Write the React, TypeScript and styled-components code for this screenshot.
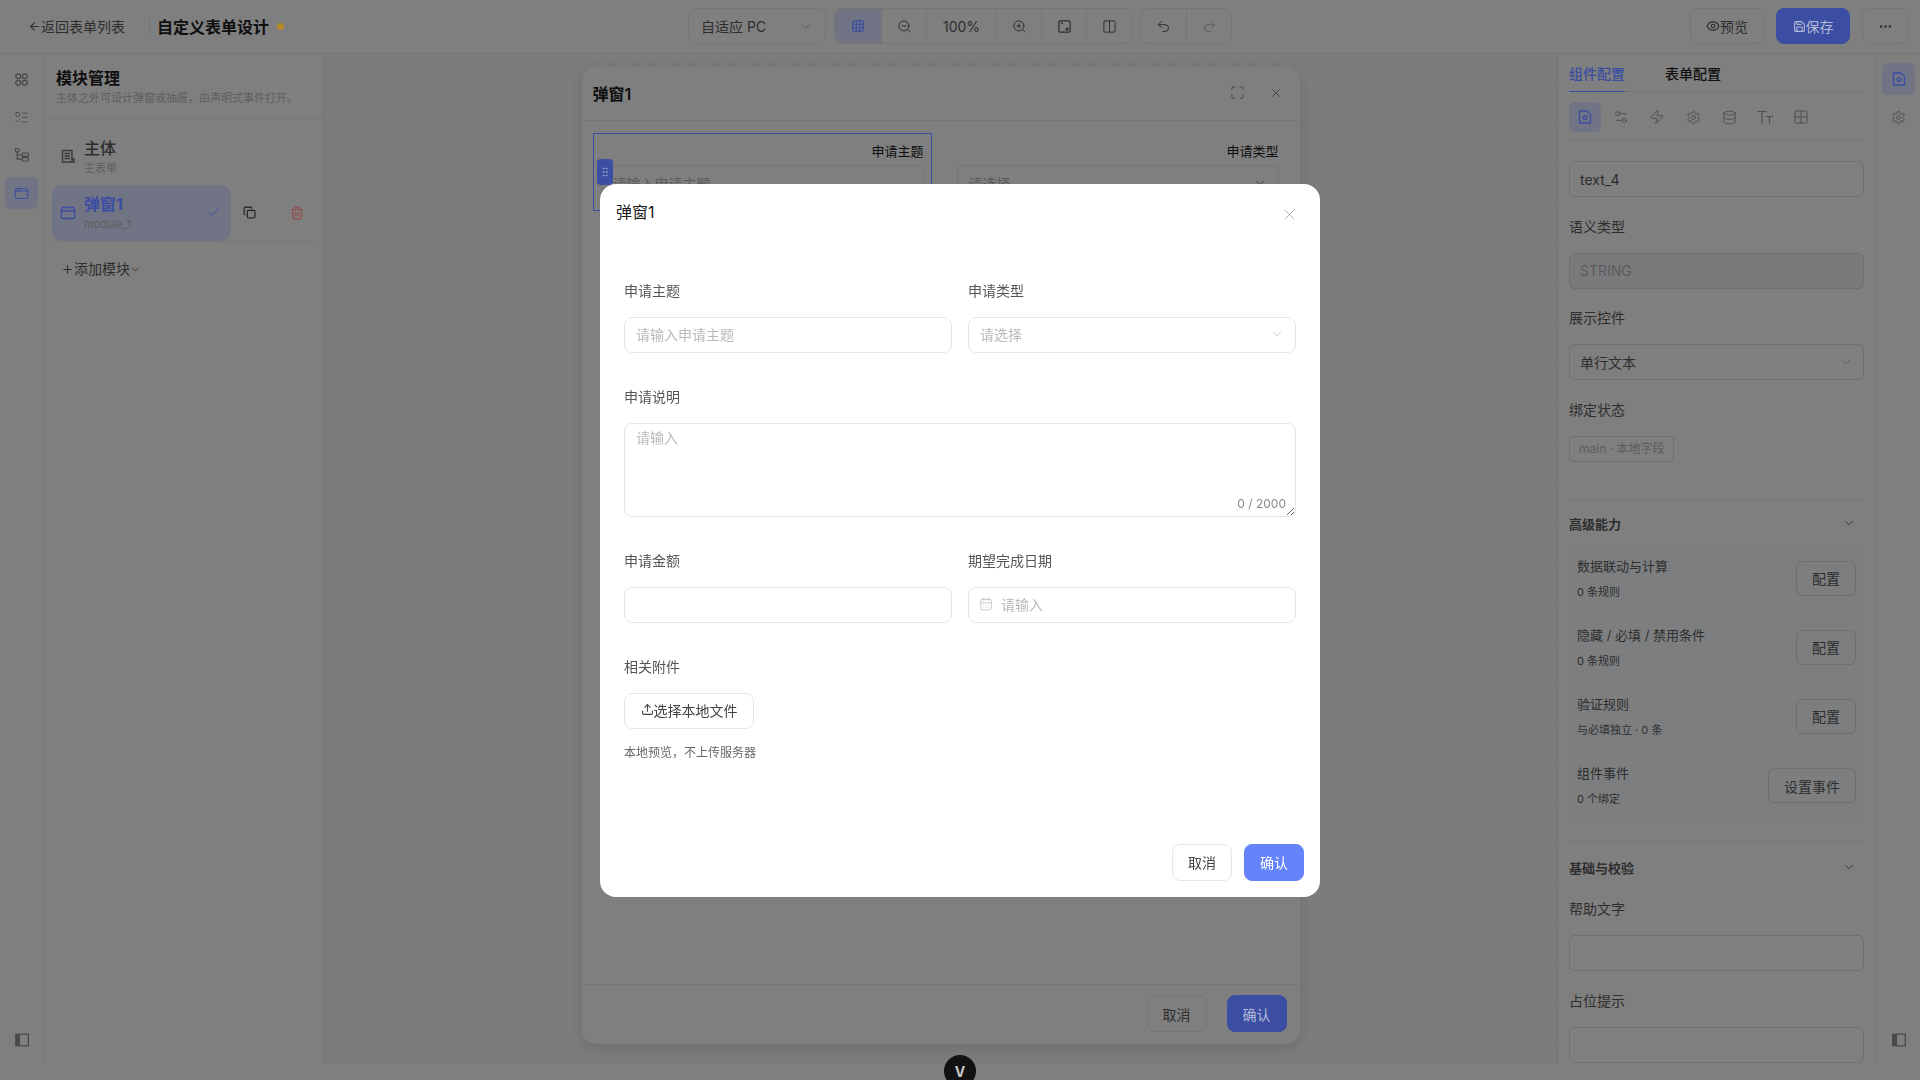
import React from "react";
import styled, { createGlobalStyle } from "styled-components";
import {
  AppWindow,
  ArrowLeft,
  CalendarDays,
  Check,
  ChevronDown,
  Columns2,
  Copy,
  Database,
  Ellipsis,
  Eye,
  Grid2x2,
  Grid3x3,
  GripVertical,
  ListTodo,
  Maximize,
  Plus,
  Redo2,
  Save,
  Settings,
  Settings2,
  Trash2,
  Undo2,
  Upload,
  X,
  Zap,
  ZoomIn,
  ZoomOut,
} from "lucide-react";

// everything behind the dialog is painted in its dimmed colours
const dim = {
  page: "#7f7f7f",
  canvas: "#7a7c7e",
  line: "#767676",
  field: "#6f6f6f",
  text: "#0f0f0f",
  text2: "#2e2e2e",
  sub: "#505050",
  faint: "#5e5e5e",
  blue: "#3b4ea3",
  activeBg: "#717485",
  disabled: "#797a7c",
};

const GlobalStyle = createGlobalStyle`
  html, body {
    margin: 0;
    height: 100%;
    overflow: hidden;
    background: ${dim.page};
    font-family: "Inter", "Noto Sans CJK SC", sans-serif;
  }
  * { box-sizing: border-box; }
  #root { height: 100%; }
`;

const Page = styled.div`
  height: 1080px;
  display: flex;
  flex-direction: column;
  color: ${dim.text};
`;

const Header = styled.header`
  height: 54px;
  flex: none;
  display: grid;
  grid-template-columns: 1fr auto 1fr;
  align-items: center;
  padding: 0 12px 1px;
  border-bottom: 1px solid ${dim.line};
`;

const HeaderLeft = styled.div`
  display: flex;
  align-items: center;
  padding-left: 16px;
`;

const BackLink = styled.span`
  display: flex;
  align-items: center;
  font-size: 14px;
  color: ${dim.text2};
  padding-right: 24px;
  border-right: 1px solid ${dim.line};
  height: 18px;
`;

const PageTitle = styled.h1`
  margin: 0 0 0 7px;
  font-size: 16px;
  font-weight: 600;
`;

const DirtyDot = styled.i`
  width: 7px;
  height: 7px;
  margin-left: 8px;
  border-radius: 50%;
  background: #b58a2a;
`;

const HeaderCenter = styled.div`
  display: flex;
  align-items: center;
  gap: 8px;
`;

const HeaderRight = styled.div`
  display: flex;
  justify-content: flex-end;
  gap: 12px;
`;

const DeviceSelect = styled.div`
  width: 138px;
  height: 36px;
  padding: 0 12px;
  display: flex;
  align-items: center;
  justify-content: space-between;
  font-size: 14px;
  color: ${dim.text2};
  border: 1px solid ${dim.line};
  border-radius: 8px;
  svg { color: ${dim.faint}; }
`;

const ToolGroup = styled.div`
  display: flex;
  height: 36px;
  border: 1px solid ${dim.line};
  border-radius: 8px;
  overflow: hidden;
`;

const ToolCell = styled.div<{ $w?: number; $active?: boolean }>`
  width: ${(p) => p.$w ?? 45}px;
  display: flex;
  align-items: center;
  justify-content: center;
  font-size: 14px;
  color: ${(p) => (p.$active ? dim.blue : dim.text2)};
  background: ${(p) => (p.$active ? dim.activeBg : "transparent")};
  & + & { border-left: 1px solid ${dim.line}; }
`;

const HeadButton = styled.div<{ $w: number; $primary?: boolean }>`
  width: ${(p) => p.$w}px;
  height: 36px;
  display: flex;
  align-items: center;
  justify-content: center;
  font-size: 14px;
  border-radius: 8px;
  color: ${(p) => (p.$primary ? "#b4bad8" : dim.text2)};
  background: ${(p) => (p.$primary ? dim.blue : "transparent")};
  border: 1px solid ${(p) => (p.$primary ? dim.blue : dim.line)};
`;

const Main = styled.div`
  height: 1010px;
  flex: none;
  display: flex;
`;

const Rail = styled.nav<{ $side: "left" | "right" }>`
  width: ${(p) => (p.$side === "left" ? 44 : 43)}px;
  flex: none;
  display: flex;
  flex-direction: column;
  gap: 6px;
  padding: 9px 5px 8px;
  ${(p) => (p.$side === "left" ? `border-right: 1px solid ${dim.line};` : "")}
`;

const RailButton = styled.div<{ $active?: boolean }>`
  width: 33px;
  height: 32px;
  flex: none;
  display: flex;
  align-items: center;
  justify-content: center;
  border-radius: 6px;
  color: ${(p) => (p.$active ? dim.blue : "#484848")};
  background: ${(p) => (p.$active ? dim.activeBg : "transparent")};
`;

const RailFoot = styled(RailButton)`
  margin-top: auto;
`;

const ModulePanel = styled.aside`
  width: 280px;
  flex: none;
  border-right: 1px solid ${dim.line};
`;

const PanelHead = styled.div`
  height: 65px;
  padding: 12px 12px 0;
  border-bottom: 1px solid ${dim.line};
`;

const PanelTitle = styled.h2`
  margin: 0;
  font-size: 16px;
  line-height: 24px;
  font-weight: 600;
`;

const PanelHint = styled.p`
  margin: 0;
  font-size: 11px;
  line-height: 16px;
  color: ${dim.faint};
`;

const ModuleList = styled.div`
  padding: 9px 8px 0 8px;
`;

const ModuleRow = styled.div<{ $divider?: boolean }>`
  display: flex;
  align-items: center;
  ${(p) => (p.$divider ? `border-bottom: 1px solid ${dim.line};` : "")}
`;

const ModuleItem = styled.div<{ $active?: boolean }>`
  width: 179px;
  height: 56.5px;
  padding: 0 10px 0 8px;
  display: flex;
  align-items: center;
  gap: 8px;
  border-radius: 10px;
  color: ${(p) => (p.$active ? dim.blue : "#3a3a3a")};
  background: ${(p) => (p.$active ? dim.activeBg : "transparent")};
`;

const ModuleText = styled.div`
  flex: 1;
  padding-top: 3px;
`;

const ModuleName = styled.div<{ $active?: boolean }>`
  font-size: 16px;
  line-height: 20px;
  font-weight: ${(p) => (p.$active ? 700 : 500)};
  color: ${(p) => (p.$active ? dim.blue : dim.text2)};
`;

const ModuleKey = styled.div`
  font-size: 11px;
  line-height: 20px;
  color: ${dim.faint};
`;

const RowAction = styled.div<{ $danger?: boolean }>`
  width: 36px;
  display: flex;
  justify-content: center;
  color: ${(p) => (p.$danger ? "#9b4a4a" : "#1c1c1c")};
  & + & { margin-left: 12px; }
`;

const AddModule = styled.div`
  display: flex;
  align-items: center;
  margin: 17px 0 0 9px;
  font-size: 14px;
  line-height: 20px;
  color: ${dim.text2};
`;

const Canvas = styled.main`
  flex: 1;
  min-width: 0;
  display: flex;
  justify-content: center;
  padding-top: 13px;
  background-color: ${dim.canvas};
  background-image: radial-gradient(#757678 1px, transparent 1px);
  background-size: 20px 20px;
`;

const PreviewDialog = styled.section`
  width: 718px;
  height: 977px;
  display: flex;
  flex-direction: column;
  background: ${dim.page};
  border-radius: 14px;
  box-shadow: 0 4px 14px rgba(0, 0, 0, 0.12);
`;

const PreviewHead = styled.div`
  height: 54px;
  flex: none;
  padding: 0 17px 2px 11px;
  display: flex;
  align-items: center;
  border-bottom: 1px solid ${dim.line};
`;

const PreviewTitle = styled.h3`
  margin: 0;
  flex: 1;
  font-size: 16px;
  font-weight: 600;
`;

const PreviewIcon = styled.span`
  display: flex;
  margin-left: 24px;
  color: #3f3f3f;
`;

const PreviewBody = styled.div`
  flex: 1;
  display: grid;
  grid-template-columns: 339px 338px;
  gap: 17px;
  align-content: start;
  padding: 12px 0 0 11px;
`;

const PreviewField = styled.div<{ $selected?: boolean }>`
  position: relative;
  height: 78px;
  padding: 7px 7px 0;
  text-align: right;
  border: 1px solid ${(p) => (p.$selected ? dim.blue : "transparent")};
`;

const PreviewLabel = styled.div`
  font-size: 13px;
  line-height: 20px;
  color: ${dim.text};
`;

const PreviewInput = styled.div`
  height: 36px;
  margin-top: 4px;
  padding: 0 11px;
  display: flex;
  align-items: center;
  justify-content: space-between;
  font-size: 14px;
  color: #5b5b5b;
  border: 1px solid ${dim.line};
  border-radius: 6px;
`;

const DragHandle = styled.span`
  position: absolute;
  left: 3px;
  top: 25px;
  width: 16px;
  height: 26px;
  display: flex;
  align-items: center;
  justify-content: center;
  border-radius: 4px;
  color: #97a1cf;
  background: ${dim.blue};
`;

const PreviewFoot = styled.div`
  height: 60px;
  flex: none;
  display: flex;
  justify-content: flex-end;
  gap: 20px;
  padding: 10px 13px 0 0;
  border-top: 1px solid ${dim.line};
`;

const PreviewButton = styled.div<{ $primary?: boolean }>`
  width: 60px;
  height: 37px;
  display: flex;
  align-items: center;
  justify-content: center;
  font-size: 14px;
  border-radius: 8px;
  color: ${(p) => (p.$primary ? "#b4bad8" : dim.text2)};
  background: ${(p) => (p.$primary ? dim.blue : "transparent")};
  border: 1px solid ${(p) => (p.$primary ? dim.blue : dim.line)};
`;

const ConfigPanel = styled.aside`
  width: 320px;
  flex: none;
  padding: 0 12px 0 11px;
  border-left: 1px solid ${dim.line};
  border-right: 1px solid ${dim.line};
  overflow: hidden;
`;

const Tabs = styled.div`
  height: 38px;
  display: flex;
  gap: 40px;
  border-bottom: 1px solid ${dim.line};
`;

const Tab = styled.div<{ $active?: boolean }>`
  height: 38px;
  padding-top: 9px;
  font-size: 14px;
  line-height: 22px;
  font-weight: 500;
  color: ${(p) => (p.$active ? dim.blue : dim.text)};
  border-bottom: 1px solid ${(p) => (p.$active ? dim.blue : "transparent")};
`;

const SubTabs = styled.div`
  display: flex;
  gap: 4px;
  padding: 10px 0 8px;
  border-bottom: 1px solid ${dim.line};
`;

const SubTab = styled.div<{ $active?: boolean }>`
  width: 32px;
  height: 30px;
  display: flex;
  align-items: center;
  justify-content: center;
  border-radius: 6px;
  color: ${(p) => (p.$active ? dim.blue : "#4c4c4c")};
  background: ${(p) => (p.$active ? dim.activeBg : "transparent")};
`;

const ConfigBox = styled.div<{ $disabled?: boolean }>`
  height: 36px;
  padding: 0 10px;
  display: flex;
  align-items: center;
  justify-content: space-between;
  font-size: 14px;
  color: ${(p) => (p.$disabled ? "#5c5c5c" : dim.text2)};
  background: ${(p) => (p.$disabled ? dim.disabled : "transparent")};
  border: 1px solid ${dim.field};
  border-radius: 6px;
  svg { color: ${dim.faint}; }
`;

const FirstBox = styled(ConfigBox)`
  margin-top: 20px;
`;

const ConfigLabel = styled.div`
  margin: 18.5px 0 15px;
  font-size: 14px;
  line-height: 22px;
  color: ${dim.text2};
`;

const HelpLabel = styled(ConfigLabel)`
  margin-top: 9px;
`;

const BindTag = styled.span`
  display: block;
  width: fit-content;
  margin-top: 1.5px;
  padding: 0 9px;
  height: 26px;
  line-height: 24px;
  font-size: 12px;
  color: #5c5c5c;
  border: 1px solid ${dim.field};
  border-radius: 4px;
`;

const SectionHead = styled.div<{ $h: number; $gap: number }>`
  height: ${(p) => p.$h}px;
  margin-top: ${(p) => p.$gap}px;
  padding: 3px 8px 0 0;
  display: flex;
  align-items: center;
  justify-content: space-between;
  font-size: 13px;
  font-weight: 600;
  color: ${dim.text2};
  border-top: 1px solid ${dim.line};
`;

const RuleList = styled.div`
  background: #7c7e80;
  border-radius: 6px;
`;

const RuleRow = styled.div`
  height: 69.2px;
  padding: 0 8px;
  display: flex;
  align-items: center;
  justify-content: space-between;
`;

const RuleTitle = styled.div`
  font-size: 13px;
  line-height: 20px;
  color: ${dim.text2};
`;

const RuleMeta = styled.div`
  margin-top: 7px;
  font-size: 11px;
  line-height: 18px;
  color: ${dim.text2};
`;

const RuleButton = styled.div`
  height: 35px;
  padding: 0 15px;
  display: flex;
  align-items: center;
  font-size: 14px;
  color: ${dim.text2};
  border: 1px solid ${dim.field};
  border-radius: 6px;
`;

const StatusBubble = styled.div`
  position: fixed;
  left: 944px;
  top: 1055px;
  width: 32px;
  height: 32px;
  display: flex;
  align-items: center;
  justify-content: center;
  border-radius: 50%;
  font-size: 14px;
  font-weight: 700;
  color: #c8c8c8;
  background: #121212;
`;

const Overlay = styled.div`
  position: fixed;
  inset: 0;
  display: flex;
  align-items: center;
  justify-content: center;
`;

const Dialog = styled.div`
  width: 720px;
  height: 713px;
  display: flex;
  flex-direction: column;
  background: #fff;
  border-radius: 16px;
  color: #1f2329;
`;

const DialogHead = styled.div`
  height: 96px;
  flex: none;
  display: flex;
  justify-content: space-between;
  padding: 16px 22px 0 16px;
`;

const DialogTitle = styled.h2`
  margin: 0;
  font-size: 16px;
  line-height: 24px;
  font-weight: 400;
  color: #1a1a1a;
`;

const DialogClose = styled.span`
  display: flex;
  margin-top: 6px;
  color: #9a9a9a;
`;

const DialogBody = styled.form`
  flex: 1;
  padding: 0 24px;
  display: flex;
  flex-direction: column;
  gap: 33px;
`;

const FormRow = styled.div`
  display: grid;
  grid-template-columns: 1fr 1fr;
  gap: 16px;
`;

const Field = styled.div``;

const FieldLabel = styled.label`
  display: block;
  margin-bottom: 15px;
  font-size: 14px;
  line-height: 22px;
  color: #555;
`;

const boxStyles = `
  width: 100%;
  height: 36px;
  padding: 0 11px;
  font-family: inherit;
  font-size: 14px;
  color: #333;
  background: #fff;
  border: 1px solid #e6e6e8;
  border-radius: 8px;
  outline: none;
  &::placeholder { color: #b9b9bd; }
`;

const TextInput = styled.input`
  ${boxStyles}
`;

const SelectBox = styled.div`
  ${boxStyles}
  display: flex;
  align-items: center;
  justify-content: space-between;
  padding-bottom: 2px;
  color: #b9b9bd;
`;

const DateBox = styled.div`
  ${boxStyles}
  display: flex;
  align-items: center;
  gap: 8px;
  padding-left: 10px;
  padding-bottom: 2px;
  color: #b9b9bd;
`;

const AreaWrap = styled.div`
  position: relative;
  height: 94px;
`;

const TextArea = styled.textarea`
  ${boxStyles}
  display: block;
  height: 94px;
  padding: 3px 11px;
  line-height: 22px;
  resize: vertical;
`;

const Counter = styled.span`
  position: absolute;
  right: 10px;
  bottom: 4px;
  font-size: 12px;
  line-height: 18px;
  color: #8a8a8a;
`;

const UploadButton = styled.button`
  width: 130px;
  height: 36px;
  display: flex;
  align-items: center;
  justify-content: center;
  padding: 0 0 2px;
  font-family: inherit;
  font-size: 14px;
  color: #444;
  background: #fff;
  border: 1px solid #e6e6e8;
  border-radius: 8px;
`;

const UploadHint = styled.p`
  margin: 15px 0 0;
  font-size: 12px;
  line-height: 18px;
  color: #666;
`;

const DialogFoot = styled.div`
  flex: none;
  display: flex;
  justify-content: flex-end;
  gap: 12px;
  padding: 0 16px 16px;
`;

const DialogButton = styled.button<{ $primary?: boolean }>`
  width: 60px;
  height: 37px;
  padding: 0;
  font-family: inherit;
  font-size: 14px;
  border-radius: 8px;
  color: ${(p) => (p.$primary ? "#fff" : "#444")};
  background: ${(p) => (p.$primary ? "#6583fa" : "#fff")};
  border: 1px solid ${(p) => (p.$primary ? "#6583fa" : "#e6e6e8")};
`;

type IconProps = { size?: number };

const stroke = {
  fill: "none",
  stroke: "currentColor",
  strokeWidth: 1.6,
  strokeLinecap: "round" as const,
  strokeLinejoin: "round" as const,
};

const ComponentsIcon = ({ size = 15 }: IconProps) => (
  <svg width={size} height={size} viewBox="0 0 16 16" {...stroke} strokeWidth={1.3}>
    <circle cx="4.5" cy="4.5" r="2.6" />
    <circle cx="11.5" cy="4.5" r="2.6" />
    <circle cx="4.5" cy="11.5" r="2.6" />
    <circle cx="11.5" cy="11.5" r="2.6" />
  </svg>
);

const TreeIcon = ({ size = 16 }: IconProps) => (
  <svg width={size} height={size} viewBox="0 0 16 16" {...stroke} strokeWidth={1.2}>
    <rect x="1.5" y="1.5" width="3.5" height="3.5" rx="1" />
    <path d="M3.2 5v7.2h4M3.2 8h4" />
    <rect x="8" y="6" width="6.5" height="3.4" rx="1" />
    <rect x="8" y="10.6" width="6.5" height="3.4" rx="1" />
  </svg>
);

const MainFormIcon = ({ size = 16 }: IconProps) => (
  <svg width={size} height={size} viewBox="0 0 16 16" {...stroke} strokeWidth={1.4}>
    <path d="M12 12.5V2.5H2.5V14H14" />
    <path d="M5 5.5h4.5M5 8h4.5M5 10.5h4.5M12 11h2v3" />
  </svg>
);

const ModuleIcon = ({ size = 16 }: IconProps) => (
  <svg width={size} height={size} viewBox="0 0 16 16" {...stroke} strokeWidth={1.4}>
    <rect x="1.5" y="2.5" width="13" height="11" rx="1.5" />
    <path d="M1.5 6h13" />
  </svg>
);

const FitIcon = ({ size = 15 }: IconProps) => (
  <svg width={size} height={size} viewBox="0 0 16 16" {...stroke} strokeWidth={1.3}>
    <rect x="2" y="2" width="12" height="12" rx="1.5" />
    <path d="M11.5 9.5v2h-2z" fill="currentColor" />
    <path d="M4.5 4.5h1.5" />
  </svg>
);

const FileGearIcon = ({ size = 16 }: IconProps) => (
  <svg width={size} height={size} viewBox="0 0 16 16" {...stroke} strokeWidth={1.4}>
    <path d="M2.5 2h7.5l3.5 3.5V14h-11z" />
    <circle cx="8" cy="8.5" r="1.8" />
  </svg>
);

const TextSizeIcon = ({ size = 16 }: IconProps) => (
  <svg width={size} height={size} viewBox="0 0 16 16" {...stroke} strokeWidth={1.2}>
    <path d="M1 2.5h8M5 2.5V14M9.5 7.5h6M12.5 7.5V14" />
  </svg>
);

const PanelToggleIcon = ({ size = 14 }: IconProps) => (
  <svg width={size} height={size} viewBox="0 0 14 14">
    <rect x="0.7" y="1.2" width="12.6" height="11.6" fill="none" stroke="currentColor" strokeWidth="1.2" />
    <rect x="1" y="1.5" width="4" height="11" fill="currentColor" />
  </svg>
);

const rules = [
  { title: "数据联动与计算", meta: "0 条规则", action: "配置" },
  { title: "隐藏 / 必填 / 禁用条件", meta: "0 条规则", action: "配置" },
  { title: "验证规则", meta: "与必填独立 · 0 条", action: "配置" },
  { title: "组件事件", meta: "0 个绑定", action: "设置事件" },
];

const App = () => {
  return (
    <>
      <GlobalStyle />
      <Page>
        <Header>
          <HeaderLeft>
            <BackLink>
              <ArrowLeft size={13} />
              返回表单列表
            </BackLink>
            <PageTitle>自定义表单设计</PageTitle>
            <DirtyDot />
          </HeaderLeft>
          <HeaderCenter>
            <DeviceSelect>
              自适应 PC
              <ChevronDown size={15} strokeWidth={1.5} />
            </DeviceSelect>
            <ToolGroup>
              <ToolCell $w={46} $active>
                <Grid3x3 size={14} />
              </ToolCell>
              <ToolCell>
                <ZoomOut size={15} strokeWidth={1.6} />
              </ToolCell>
              <ToolCell $w={70}>100%</ToolCell>
              <ToolCell>
                <ZoomIn size={15} strokeWidth={1.6} />
              </ToolCell>
              <ToolCell>
                <FitIcon />
              </ToolCell>
              <ToolCell>
                <Columns2 size={15} strokeWidth={1.5} />
              </ToolCell>
            </ToolGroup>
            <ToolGroup>
              <ToolCell>
                <Undo2 size={15} strokeWidth={1.5} />
              </ToolCell>
              <ToolCell>
                <Redo2 size={15} strokeWidth={1.5} color="#5c5c5c" />
              </ToolCell>
            </ToolGroup>
          </HeaderCenter>
          <HeaderRight>
            <HeadButton $w={74}>
              <Eye size={14} />
              预览
            </HeadButton>
            <HeadButton $w={74} $primary>
              <Save size={13} />
              保存
            </HeadButton>
            <HeadButton $w={46}>
              <Ellipsis size={15} />
            </HeadButton>
          </HeaderRight>
        </Header>

        <Main>
          <Rail $side="left">
            <RailButton>
              <ComponentsIcon />
            </RailButton>
            <RailButton>
              <ListTodo size={15} strokeWidth={1.3} />
            </RailButton>
            <RailButton>
              <TreeIcon />
            </RailButton>
            <RailButton $active>
              <AppWindow size={15} strokeWidth={1.5} />
            </RailButton>
            <RailFoot>
              <PanelToggleIcon />
            </RailFoot>
          </Rail>

          <ModulePanel>
            <PanelHead>
              <PanelTitle>模块管理</PanelTitle>
              <PanelHint>主体之外可设计弹窗或抽屉，由声明式事件打开。</PanelHint>
            </PanelHead>
            <ModuleList>
              <ModuleRow>
                <ModuleItem>
                  <MainFormIcon />
                  <ModuleText>
                    <ModuleName>主体</ModuleName>
                    <ModuleKey>主表单</ModuleKey>
                  </ModuleText>
                </ModuleItem>
              </ModuleRow>
              <ModuleRow $divider>
                <ModuleItem $active>
                  <ModuleIcon />
                  <ModuleText>
                    <ModuleName $active>弹窗1</ModuleName>
                    <ModuleKey>module_1</ModuleKey>
                  </ModuleText>
                  <Check size={15} strokeWidth={1.6} />
                </ModuleItem>
                <RowAction>
                  <Copy size={13} />
                </RowAction>
                <RowAction $danger>
                  <Trash2 size={14} />
                </RowAction>
              </ModuleRow>
              <AddModule>
                <Plus size={13} />
                添加模块
                <ChevronDown size={11} />
              </AddModule>
            </ModuleList>
          </ModulePanel>

          <Canvas>
            <PreviewDialog>
              <PreviewHead>
                <PreviewTitle>弹窗1</PreviewTitle>
                <PreviewIcon>
                  <Maximize size={15} strokeWidth={1.4} />
                </PreviewIcon>
                <PreviewIcon>
                  <X size={14} strokeWidth={1.4} />
                </PreviewIcon>
              </PreviewHead>
              <PreviewBody>
                <PreviewField $selected>
                  <DragHandle>
                    <GripVertical size={12} />
                  </DragHandle>
                  <PreviewLabel>申请主题</PreviewLabel>
                  <PreviewInput>请输入申请主题</PreviewInput>
                </PreviewField>
                <PreviewField>
                  <PreviewLabel>申请类型</PreviewLabel>
                  <PreviewInput>
                    请选择
                    <ChevronDown size={14} />
                  </PreviewInput>
                </PreviewField>
              </PreviewBody>
              <PreviewFoot>
                <PreviewButton>取消</PreviewButton>
                <PreviewButton $primary>确认</PreviewButton>
              </PreviewFoot>
            </PreviewDialog>
          </Canvas>

          <ConfigPanel>
            <Tabs>
              <Tab $active>组件配置</Tab>
              <Tab>表单配置</Tab>
            </Tabs>
            <SubTabs>
              <SubTab $active>
                <FileGearIcon />
              </SubTab>
              <SubTab>
                <Settings2 size={16} strokeWidth={1.4} />
              </SubTab>
              <SubTab>
                <Zap size={16} strokeWidth={1.4} />
              </SubTab>
              <SubTab>
                <Settings size={15} strokeWidth={1.4} />
              </SubTab>
              <SubTab>
                <Database size={15} strokeWidth={1.4} />
              </SubTab>
              <SubTab>
                <TextSizeIcon />
              </SubTab>
              <SubTab>
                <Grid2x2 size={16} strokeWidth={1.4} />
              </SubTab>
            </SubTabs>
            <FirstBox>text_4</FirstBox>
            <ConfigLabel>语义类型</ConfigLabel>
            <ConfigBox $disabled>STRING</ConfigBox>
            <ConfigLabel>展示控件</ConfigLabel>
            <ConfigBox>
              单行文本
              <ChevronDown size={14} strokeWidth={1.5} />
            </ConfigBox>
            <ConfigLabel>绑定状态</ConfigLabel>
            <BindTag>main · 本地字段</BindTag>
            <SectionHead $h={45} $gap={37}>
              高级能力
              <ChevronDown size={14} strokeWidth={1.5} />
            </SectionHead>
            <RuleList>
              {rules.map((rule) => (
                <RuleRow key={rule.title}>
                  <div>
                    <RuleTitle>{rule.title}</RuleTitle>
                    <RuleMeta>{rule.meta}</RuleMeta>
                  </div>
                  <RuleButton>{rule.action}</RuleButton>
                </RuleRow>
              ))}
            </RuleList>
            <SectionHead $h={48} $gap={21}>
              基础与校验
              <ChevronDown size={14} strokeWidth={1.5} />
            </SectionHead>
            <HelpLabel>帮助文字</HelpLabel>
            <ConfigBox />
            <ConfigLabel>占位提示</ConfigLabel>
            <ConfigBox />
          </ConfigPanel>

          <Rail $side="right">
            <RailButton $active>
              <FileGearIcon />
            </RailButton>
            <RailButton>
              <Settings size={15} strokeWidth={1.4} />
            </RailButton>
            <RailFoot>
              <PanelToggleIcon />
            </RailFoot>
          </Rail>
        </Main>
      </Page>

      <StatusBubble>V</StatusBubble>

      <Overlay>
        <Dialog>
          <DialogHead>
            <DialogTitle>弹窗1</DialogTitle>
            <DialogClose>
              <X size={17} strokeWidth={1.1} />
            </DialogClose>
          </DialogHead>
          <DialogBody>
            <FormRow>
              <Field>
                <FieldLabel>申请主题</FieldLabel>
                <TextInput placeholder="请输入申请主题" />
              </Field>
              <Field>
                <FieldLabel>申请类型</FieldLabel>
                <SelectBox>
                  请选择
                  <ChevronDown size={14} strokeWidth={1.4} />
                </SelectBox>
              </Field>
            </FormRow>
            <Field>
              <FieldLabel>申请说明</FieldLabel>
              <AreaWrap>
                <TextArea placeholder="请输入" />
                <Counter>0 / 2000</Counter>
              </AreaWrap>
            </Field>
            <FormRow>
              <Field>
                <FieldLabel>申请金额</FieldLabel>
                <TextInput />
              </Field>
              <Field>
                <FieldLabel>期望完成日期</FieldLabel>
                <DateBox>
                  <CalendarDays size={14} strokeWidth={1.3} />
                  请输入
                </DateBox>
              </Field>
            </FormRow>
            <Field>
              <FieldLabel>相关附件</FieldLabel>
              <UploadButton type="button">
                <Upload size={13} />
                选择本地文件
              </UploadButton>
              <UploadHint>本地预览，不上传服务器</UploadHint>
            </Field>
          </DialogBody>
          <DialogFoot>
            <DialogButton type="button">取消</DialogButton>
            <DialogButton type="button" $primary>
              确认
            </DialogButton>
          </DialogFoot>
        </Dialog>
      </Overlay>
    </>
  );
};

export default App;
